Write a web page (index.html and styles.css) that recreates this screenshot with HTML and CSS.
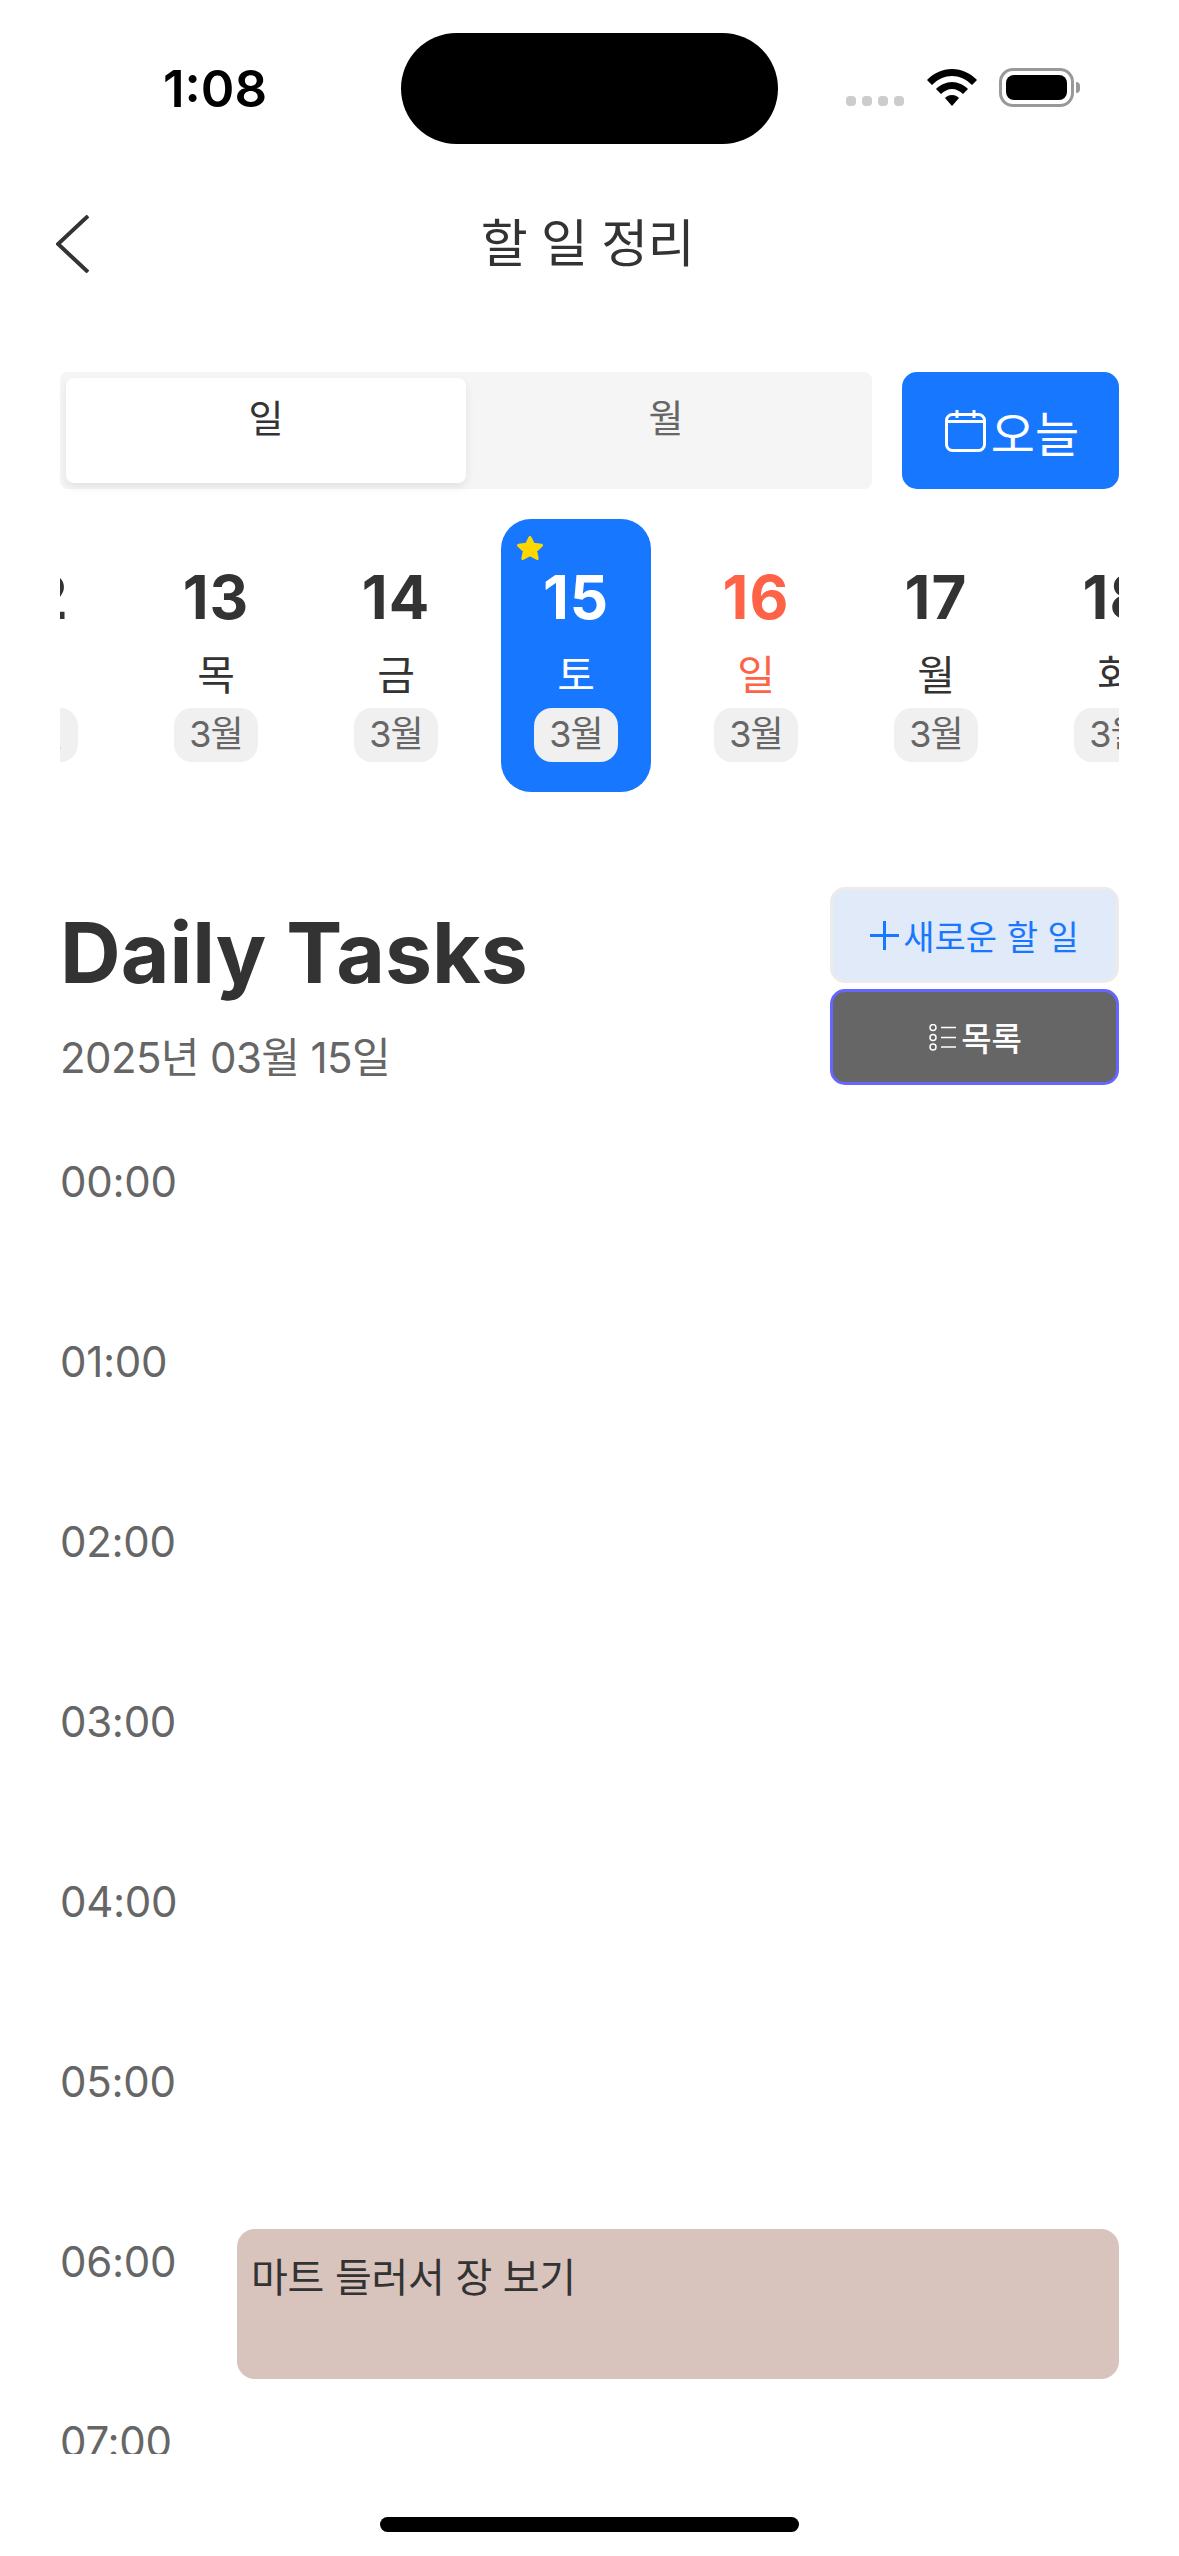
FILE: index.html
```html
<!DOCTYPE html>
<html lang="ko">
<head>
    <meta charset="UTF-8">
    <meta name="viewport" content="width=device-width, initial-scale=1.0">
    <title>할 일 정리</title>
    <link rel="stylesheet" href="styles.css">
</head>
<body>

    <div class="status-bar">
        <div class="time">1:08</div>
        <div class="island"></div>
        <div class="status-icons">
            <div class="signal"><span></span><span></span><span></span><span></span></div>
            <svg class="wifi" width="50" height="37" viewBox="0 0 50 37">
                <path d="M0 11C7 4 15 0 25 0C35 0 43 4 50 11L45 16C39 10 32 7 25 7C18 7 11 10 5 16Z"/>
                <path d="M9 20C13 16 19 13 25 13C31 13 37 16 41 20L36 25C33 22 29 20 25 20C21 20 17 22 14 25Z"/>
                <path d="M18 29C20 27 22 26 25 26C28 26 30 27 32 29L25 37Z"/>
            </svg>
            <div class="battery"><div class="battery-level"></div></div>
            <div class="battery-nub"></div>
        </div>
    </div>

    <div class="nav">
        <svg class="back" width="33" height="58" viewBox="0 0 33 58">
            <path d="M32 1L2 29L32 57"/>
        </svg>
        <div class="nav-title">할 일 정리</div>
    </div>

    <div class="controls">
        <div class="segment">
            <div class="tab active">일</div>
            <div class="tab">월</div>
        </div>
        <button class="today-btn">
            <svg width="41" height="43" viewBox="0 0 41 43">
                <rect x="1.5" y="5.5" width="38" height="36" rx="6"/>
                <path d="M1.5 12.5H39.5M12 1V9M29 1V9"/>
            </svg>
            <span>오늘</span>
        </button>
    </div>

    <div class="date-strip">
        <div class="day"><div class="day-num">12</div><div class="day-name">수</div><div class="day-month">3월</div></div>
        <div class="day"><div class="day-num">13</div><div class="day-name">목</div><div class="day-month">3월</div></div>
        <div class="day"><div class="day-num">14</div><div class="day-name">금</div><div class="day-month">3월</div></div>
        <div class="day selected">
            <svg class="star" width="28" height="26" viewBox="0 0 28 26">
                <path d="M14 2.5L17.4 9.3L25.5 10.3L19.6 15.8L21.2 23.5L14 19.7L6.8 23.5L8.4 15.8L2.5 10.3L10.6 9.3Z"/>
            </svg>
            <div class="day-num">15</div><div class="day-name">토</div><div class="day-month">3월</div>
        </div>
        <div class="day sunday"><div class="day-num">16</div><div class="day-name">일</div><div class="day-month">3월</div></div>
        <div class="day"><div class="day-num">17</div><div class="day-name">월</div><div class="day-month">3월</div></div>
        <div class="day"><div class="day-num">18</div><div class="day-name">화</div><div class="day-month">3월</div></div>
    </div>

    <div class="header">
        <div class="header-text">
            <h1>Daily Tasks</h1>
            <div class="header-date">2025년 03월 15일</div>
        </div>
        <div class="header-buttons">
            <button class="new-btn">
                <svg width="29" height="29" viewBox="0 0 29 29"><path d="M14.5 0V29M0 14.5H29"/></svg>
                <span>새로운 할 일</span>
            </button>
            <button class="list-btn">
                <svg width="28" height="27" viewBox="0 0 28 27">
                    <circle cx="4" cy="3.5" r="3"/><circle cx="4" cy="13.5" r="3"/><circle cx="4" cy="23" r="3"/>
                    <path d="M12 3.5H27M12 13.5H27M12 23H27"/>
                </svg>
                <span>목록</span>
            </button>
        </div>
    </div>

    <div class="timeline">
        <div class="row"><div class="hour">00:00</div></div>
        <div class="row"><div class="hour">01:00</div></div>
        <div class="row"><div class="hour">02:00</div></div>
        <div class="row"><div class="hour">03:00</div></div>
        <div class="row"><div class="hour">04:00</div></div>
        <div class="row"><div class="hour">05:00</div></div>
        <div class="row"><div class="hour">06:00</div><div class="event">마트 들러서 장 보기</div></div>
        <div class="row"><div class="hour">07:00</div></div>
    </div>

    <div class="home-indicator"></div>

</body>
</html>
```

FILE: styles.css
```css
* {
    box-sizing: border-box;
}
body {
    margin: 0;
    width: 1179px;
    height: 2556px;
    overflow: hidden;
    background-color: #fff;
    color: #333;
    font-family: Inter, "Noto Sans CJK KR", sans-serif;
}
button {
    font-family: inherit;
    padding: 0;
    border: none;
}

/* status bar */
.status-bar {
    display: flex;
    align-items: flex-start;
    height: 144px;
    padding-top: 33px;
    padding-left: 163px;
}
.time {
    width: 238px;
    margin-top: 25px;
    font-size: 51px;
    line-height: 62px;
    font-weight: 600;
    color: #000;
}
.island {
    width: 377px;
    height: 111px;
    border-radius: 56px;
    background-color: #000;
}
.status-icons {
    display: flex;
    align-items: flex-start;
    margin-top: 35px;
    margin-left: 68px;
}
.signal {
    display: flex;
    gap: 6px;
    width: 81px;
    margin-top: 28px;
}
.signal span {
    width: 10px;
    height: 10px;
    border-radius: 4px;
    background-color: #ccc;
}
.wifi {
    margin-top: 1px;
    fill: #000;
}
.battery {
    width: 75px;
    height: 39px;
    margin-left: 22px;
    padding: 4px;
    border: 3px solid #999;
    border-radius: 14px;
}
.battery-level {
    height: 100%;
    border-radius: 8px;
    background-color: #000;
}
.battery-nub {
    width: 4px;
    height: 11px;
    margin-top: 14px;
    margin-left: 2px;
    border-radius: 0 4px 4px 0;
    background-color: #999;
}

/* nav */
.nav {
    display: grid;
    grid-template-columns: 1fr auto 1fr;
    align-items: center;
    height: 228px;
    padding: 0 60px 28px 56px;
}
.back {
    fill: none;
    stroke: #333;
    stroke-width: 4px;
}
.nav-title {
    font-size: 51px;
    line-height: 70px;
    letter-spacing: -0.5px;
    color: #333;
}

/* day / month switch */
.controls {
    display: flex;
    gap: 30px;
    height: 117px;
    margin: 0 60px;
}
.segment {
    display: flex;
    width: 812px;
    padding: 6px;
    border-radius: 8px;
    background-color: #f5f5f5;
}
.tab {
    flex: 1;
    padding-top: 14px;
    font-size: 38px;
    line-height: 52px;
    text-align: center;
    color: #666;
    border-radius: 8px;
}
.tab.active {
    background-color: #fff;
    color: #333;
    box-shadow: 0 4px 10px rgba(0, 0, 0, 0.08);
}
.today-btn {
    display: flex;
    align-items: center;
    justify-content: center;
    gap: 5px;
    width: 217px;
    padding-left: 3px;
    border-radius: 15px;
    background-color: #1877ff;
    color: #fff;
    font-size: 48px;
}
.today-btn svg {
    fill: none;
    stroke: #fff;
    stroke-width: 3px;
}

/* date strip */
.date-strip {
    display: flex;
    gap: 30px;
    height: 273px;
    margin: 30px 60px 0;
    overflow: hidden;
}
.day {
    position: relative;
    display: flex;
    flex-direction: column;
    align-items: center;
    flex-shrink: 0;
    width: 150px;
    padding-top: 42px;
    border-radius: 30px;
}
.day:first-child {
    margin-left: -99px;
}
.day-num {
    font-size: 60px;
    line-height: 72px;
    font-weight: 700;
    letter-spacing: 1px;
}
.day-name {
    margin-top: 16px;
    font-size: 41px;
    line-height: 52px;
}
.day-month {
    width: 84px;
    height: 54px;
    margin-top: 7px;
    border-radius: 18px;
    background-color: #f0f0f0;
    color: #666;
    font-size: 36px;
    line-height: 52px;
    text-align: center;
    letter-spacing: -1px;
}
.selected {
    background-color: #1877ff;
}
.selected .day-num,
.selected .day-name {
    color: #fff;
}
.sunday .day-num,
.sunday .day-name {
    color: #ff6347;
}
.star {
    position: absolute;
    top: 16px;
    left: 15px;
    fill: #ffd700;
    stroke: #ffd700;
    stroke-width: 3px;
    stroke-linejoin: round;
}

/* header */
.header {
    display: flex;
    justify-content: space-between;
    margin: 95px 60px 0;
}
h1 {
    margin: 15px 0 0;
    font-size: 84px;
    line-height: 102px;
    font-weight: 700;
}
.header-date {
    margin-top: 29px;
    font-size: 42px;
    line-height: 50px;
    letter-spacing: -0.6px;
    color: #666;
}
.header-buttons {
    display: flex;
    flex-direction: column;
    gap: 6px;
    width: 289px;
}
.new-btn,
.list-btn {
    display: flex;
    align-items: center;
    justify-content: center;
    gap: 4px;
    height: 96px;
    border-radius: 15px;
}
.new-btn {
    border: 3px solid #ebebeb;
    background-color: #e0eaf9;
    color: #1877ff;
    font-size: 34px;
}
.new-btn svg {
    fill: none;
    stroke: #1877ff;
    stroke-width: 3px;
}
.list-btn {
    padding-left: 2px;
    border: 3px solid #6666ff;
    background-color: #666;
    color: #fff;
    font-size: 33px;
    font-weight: 500;
}
.list-btn svg {
    fill: none;
    stroke: #fff;
    stroke-width: 1.5px;
}

/* timeline */
.timeline {
    height: 1369px;
    margin: 0 60px;
    padding-top: 64px;
    overflow: hidden;
}
.row {
    display: flex;
    height: 180px;
}
.hour {
    width: 177px;
    flex-shrink: 0;
    font-size: 42px;
    line-height: 66px;
    letter-spacing: -0.3px;
    color: #666;
}
.event {
    flex: 1;
    height: 150px;
    padding: 20px 14px;
    border-radius: 18px;
    background-color: #d8c4bd;
    color: #333;
    font-size: 40px;
    line-height: 58px;
    letter-spacing: -0.3px;
}

.home-indicator {
    width: 419px;
    height: 15px;
    margin: 63px auto 0;
    border-radius: 8px;
    background-color: #000;
}
```
